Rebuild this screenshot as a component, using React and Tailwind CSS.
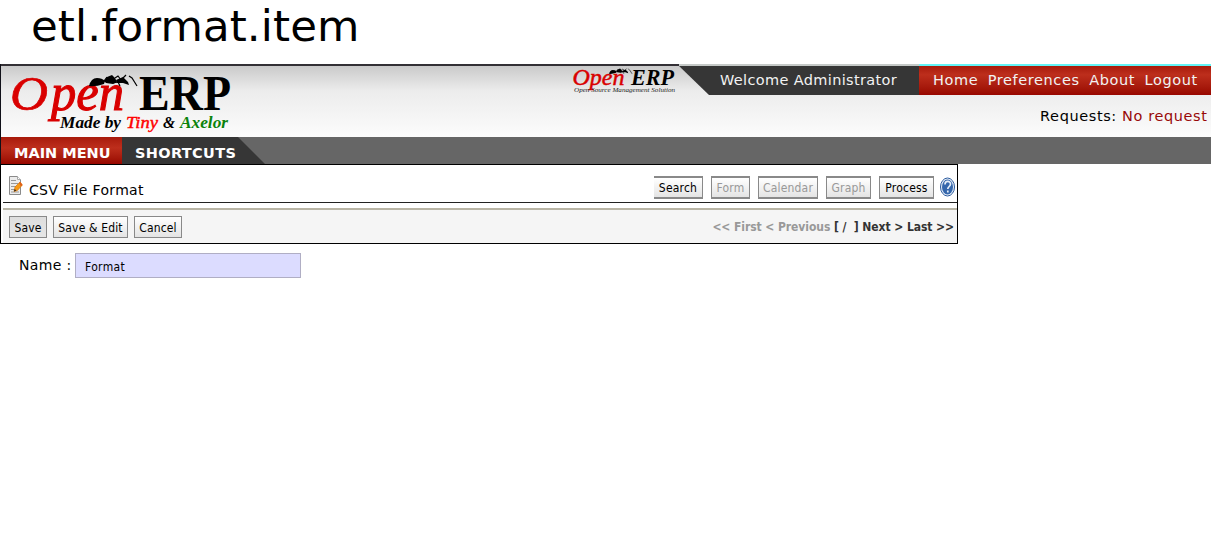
const sans = "font-['DejaVu_Sans',sans-serif]";

function Ant({ transform }) {
  return (
    <g transform={transform} fill="#000">
      <path d="M0 11Q2 3 8 3Q13 3 16 6L15 9Q6 12 0 11Z" />
      <path d="M15 6L18 2 23 0 26 3 28 7 24 9 17 8Z" />
      <path d="M27 5L34 2 39 7 40 10 34 8 28 8Z" />
      <path d="M18 2l-3 4M26 3l3-2 3 4M34 3l3-3M40 1l3 2 5 8M24 8l5-1 2 4" fill="none" stroke="#000" strokeWidth="1.200" />
    </g>
  );
}

function BigLogo() {
  return (
    <svg width="235" height="71" viewBox="0 66 235 71" className="block shrink-0 overflow-visible" fontFamily="'Palatino Linotype','Liberation Serif',serif">
      <g fontStyle="italic" fill="#d90000" stroke="#d90000">
        <text x="10" y="110" fontSize="49" strokeWidth=".7" textLength="38" lengthAdjust="spacingAndGlyphs">O</text>
        <text x="51" y="110" fontSize="52" strokeWidth="1.100" textLength="73" lengthAdjust="spacingAndGlyphs">pen</text>
      </g>
      <text x="139" y="110" fontSize="50" fontWeight="bold" textLength="92" lengthAdjust="spacingAndGlyphs">ERP</text>
      <Ant transform="translate(89 75)" />
      <g fontSize="16" fontStyle="italic" fontWeight="bold">
        <text x="60" y="127.500" textLength="61" lengthAdjust="spacingAndGlyphs">Made by</text>
        <text x="126" y="127.500" fill="#f00" fontWeight="normal" stroke="#f00" strokeWidth=".4" textLength="32" lengthAdjust="spacingAndGlyphs">Tiny</text>
        <text x="163" y="127.500" textLength="12" lengthAdjust="spacingAndGlyphs">&amp;</text>
        <text x="180" y="127.500" fill="#0b830b" textLength="48" lengthAdjust="spacingAndGlyphs">Axelor</text>
      </g>
    </svg>
  );
}

function SmallLogo() {
  return (
    <svg width="107" height="29" viewBox="572 66 107 29" className="block shrink-0 overflow-visible" fontFamily="'Liberation Serif',serif">
      <text x="572.500" y="84.500" fontSize="24" fontStyle="italic" fill="#d90000" stroke="#d90000" strokeWidth=".5" textLength="52" lengthAdjust="spacingAndGlyphs">Open</text>
      <text x="631" y="84.500" fontSize="24" fontStyle="italic" fontWeight="bold" textLength="43" lengthAdjust="spacingAndGlyphs">ERP</text>
      <Ant transform="translate(609 68.500) scale(.48)" />
      <text x="574" y="91.500" fontSize="7" fontStyle="italic" fill="#222" textLength="101" lengthAdjust="spacingAndGlyphs">Open Source Management Solution</text>
    </svg>
  );
}

function FormIcon() {
  return (
    <svg width="14" height="20" viewBox="0 0 14 20" className="block">
      <path d="M.500.500h8l3 3v15h-11z" fill="#ececec" stroke="#8a8a8a" />
      <path d="M8.500.500v3h3" fill="#fff" stroke="#aaa" />
      <path d="M2 4.500h5M2 7.500h7M2 10.500h5M2 13.500h3M2 16h8" stroke="#999" />
      <path d="M5 15.500l1-4.500 5-5 2.300 3-5 5.500z" fill="#f79a16" stroke="#d97508" strokeWidth=".7" />
      <path d="M10 7l1.500-1 2 3-1.500 1.500z" fill="#e0601a" />
      <path d="M5 15.500l.6-2.500 1.700 1.600z" fill="#222" />
    </svg>
  );
}

function HelpIcon() {
  return (
    <svg width="16" height="20" viewBox="0 0 16 20" className="block">
      <ellipse cx="7.500" cy="10" rx="7" ry="9" fill="#e8eff8" stroke="#2d5c9f" strokeWidth="1" />
      <ellipse cx="7.500" cy="10" rx="5.500" ry="7.500" fill="#3567ac" />
      <path d="M5 7.500c0-4 5.500-4 5.500-.5 0 2.500-2.700 2.500-2.700 5M7.800 13.500v2" fill="none" stroke="#e8eff8" strokeWidth="1.700" />
    </svg>
  );
}

const btn = "flex h-[22px] shrink-0 items-center justify-center border border-[#898989] bg-linear-to-b whitespace-pre pt-[2px] font-['DejaVu_Sans_Condensed','DejaVu_Sans',sans-serif] [font-stretch:condensed] text-[12px] tracking-[0.15px]";
const light = "from-white to-[#e4e4e4]";
const viewBtn = "flex h-[23px] shrink-0 items-center justify-center border border-y-2 border-[#898989] bg-linear-to-b from-white to-[#e4e4e4] whitespace-pre pt-px font-['DejaVu_Sans_Condensed','DejaVu_Sans',sans-serif] [font-stretch:condensed] text-[12px] tracking-[0.2px]";

export default function App() {
  return (
    <div className={`h-[544px] w-[1213px] overflow-hidden bg-white text-black ${sans}`}>
      <h1 className="h-16 pl-[31px] text-[43.500px] leading-[52px] tracking-[0.1px] whitespace-nowrap">etl.format.item</h1>

      <div className="w-[1211px] border-l border-[#101018]">
        <header className="flex h-[73px] flex-col">
          <div className="flex h-[2px] shrink-0">
            <div className="w-[678px] bg-[#333035]" />
            <div className="w-[240px] bg-[#c5c9c7]" />
            <div className="flex-1 bg-[#62f4f7]" />
          </div>
          <div className="flex h-[71px] bg-linear-to-b from-[#cacaca] via-[#ececec] via-35% to-[#fcfcfc]">
            <div className="-ml-px"><BigLogo /></div>
            <div className="ml-[337px]"><SmallLogo /></div>
            <div className="flex flex-1 flex-col">
              <div className="flex h-[29px] text-[14.500px] text-[#f2f2f2]">
                <div className="flex w-[240px] items-center bg-[#363636] pl-[41px] whitespace-nowrap [clip-path:polygon(0_0,100%_0,100%_100%,30px_100%)]">
                  <span className="tracking-[0.35px]">Welcome Administrator</span>
                </div>
                <nav className="flex flex-1 items-center gap-[9.500px] bg-linear-to-b from-[#a81a0b] via-[#bd2e1c] via-30% to-[#980600] pl-[14px] tracking-[0.6px] whitespace-nowrap">
                  <a>Home</a><a>Preferences</a><a>About</a><a>Logout</a>
                </nav>
              </div>
              <div className="flex h-[42px] items-center justify-end pt-[2px] pr-[3.500px] text-[14.500px] tracking-[0.6px] whitespace-pre">
                Requests: <span className="text-[#980808]">No request</span>
              </div>
            </div>
          </div>
        </header>

        <nav className="flex h-[27px] bg-[#666] text-[14.500px] leading-[32px] font-bold whitespace-nowrap text-white">
          <div className="w-[121px] bg-linear-to-b from-[#a81a0b] via-[#bd2e1c] via-40% to-[#980600] pl-[13px]">MAIN MENU</div>
          <div className="w-[143px] bg-[#363636] pl-[13px] tracking-[0.35px] [clip-path:polygon(0_0,116px_0,100%_100%,0_100%)]">SHORTCUTS</div>
        </nav>
      </div>

      <main className="flex h-20 w-[958px] flex-col border border-black">
        <div className="ml-[2px] flex h-[38px] shrink-0 border-b border-[#222]">
          <div className="mt-[11px] ml-[6px]"><FormIcon /></div>
          <div className="mt-[17px] ml-[6px] text-[14px] leading-4 tracking-[0.33px] whitespace-nowrap">CSV File Format</div>
          <div className="mt-[11px] mr-px ml-auto flex">
            <div className={`${viewBtn} w-[49px] border-l-0`}>Search</div>
            <div className={`${viewBtn} ml-2 w-[39px] text-[#999]`}>Form</div>
            <div className={`${viewBtn} ml-2 w-[60px] text-[#999]`}>Calendar</div>
            <div className={`${viewBtn} ml-2 w-[45px] text-[#999]`}>Graph</div>
            <div className={`${viewBtn} ml-2 w-[55px]`}>Process</div>
            <div className="mt-px ml-[6px]"><HelpIcon /></div>
          </div>
        </div>
        <div className="mt-[5px] ml-[2px] flex flex-1 border-t-2 border-[#b9b5a5] bg-[#f5f5f5] pt-[6px] pl-[6px]">
          <div className={`${btn} w-[38px] from-[#dedede] to-[#e6e6e6]`}>Save</div>
          <div className={`${btn} ${light} ml-[6px] w-[75px]`}>Save &amp; Edit</div>
          <div className={`${btn} ${light} ml-[6px] w-[48px]`}>Cancel</div>
          <div className="mr-[3px] ml-auto h-[22px] font-['DejaVu_Sans_Condensed','DejaVu_Sans',sans-serif] text-[12px] leading-[23px] font-bold [font-stretch:condensed] tracking-[-0.07px] whitespace-pre text-[#333]">
            <span className="text-[#999]">{"<< First < Previous "}</span>{"[ /  ] Next > Last >>"}
          </div>
        </div>
      </main>

      <div className="mt-[9px] ml-[19px] flex">
        <label className="w-[56px] text-[14px] leading-[24px] tracking-[0.35px] whitespace-nowrap">Name :</label>
        <div className="h-[25px] w-[226px] border border-[#b0aec4] bg-[#dcdcff] pl-[9px] font-['DejaVu_Sans_Condensed','DejaVu_Sans',sans-serif] text-[12px] leading-[26px] [font-stretch:condensed] tracking-[0.35px]">Format</div>
      </div>
    </div>
  );
}
